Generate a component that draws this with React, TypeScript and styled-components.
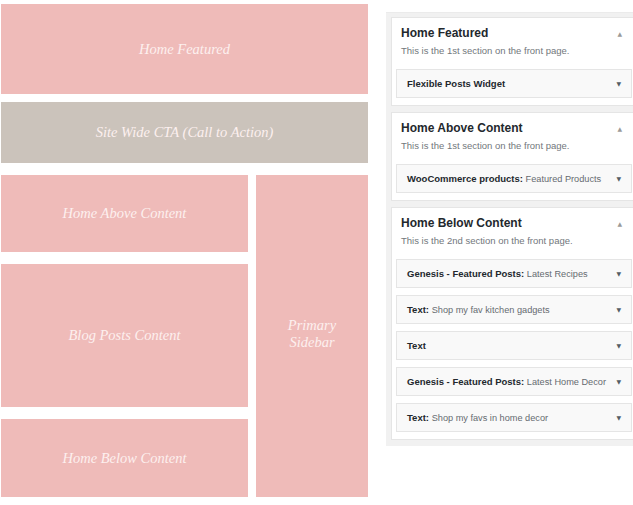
import styled, { createGlobalStyle } from "styled-components"

const GlobalStyle = createGlobalStyle`
  html, body {
    margin: 0;
    padding: 0;
    background: #ffffff;
    overflow: hidden;
  }
`

const Page = styled.div`
  display: flex;
  align-items: flex-start;
  gap: 18px;
  padding: 4px 0 0 1px;
  width: 700px;
`

/* ---------- layout diagram ---------- */

const Diagram = styled.div`
  width: 367px;
  display: flex;
  flex-direction: column;
`

const Block = styled.div<{ $h?: number; $tone?: "pink" | "stone" }>`
  height: ${(p) => (p.$h ? `${p.$h}px` : "auto")};
  background: ${(p) => (p.$tone === "stone" ? "#cbc3bb" : "#efbbb9")};
  display: flex;
  align-items: center;
  justify-content: center;
  text-align: center;

  font-family: "Liberation Serif", serif;
  font-style: italic;
  font-size: 14.5px;
  line-height: 17px;
  color: #fdf0ef;
`

const FeaturedBlock = styled(Block)`
  margin-bottom: 8px;
`

const CtaBlock = styled(Block)`
  margin-bottom: 12px;
`

const ContentArea = styled.div`
  display: grid;
  grid-template-columns: 247px 112px;
  column-gap: 8px;
`

const ContentColumn = styled.div`
  display: flex;
  flex-direction: column;
  gap: 12px;
`

const Sidebar = styled(Block)`
  padding-bottom: 4px;
`

/* ---------- widget areas ---------- */

const Panel = styled.div`
  margin-top: 8px;
  width: 246px;
  background: #f1f1f1;
  border-top: 1px solid #ebebeb;
  padding: 4px 5px 6px 5px;
  display: flex;
  flex-direction: column;
  gap: 6px;
`

const Card = styled.div`
  background: #ffffff;
  border: 1px solid #e5e5e5;
  padding: 0 4px 7px 4px;
`

const CardHead = styled.div`
  display: flex;
  justify-content: space-between;
  align-items: center;
  padding: 7px 5px 0 5px;
  height: 16px;
`

const CardTitle = styled.h3`
  margin: 0;
  font-family: "Liberation Sans", Arial, sans-serif;
  font-size: 12px;
  font-weight: 700;
  color: #23282d;
`

const Toggle = styled.span<{ $dim?: boolean }>`
  font-family: "DejaVu Sans", sans-serif;
  font-size: 6px;
  color: ${(p) => (p.$dim ? "#9a9a9a" : "#555d66")};
  margin-right: ${(p) => (p.$dim ? "5px" : "1px")};
`

const Description = styled.p`
  margin: 4px 0 0 0;
  padding: 0 5px;
  font-family: "Liberation Sans", Arial, sans-serif;
  font-size: 9.5px;
  line-height: 12px;
  color: #72777c;
`

const WidgetList = styled.div`
  margin-top: 12px;
  display: flex;
  flex-direction: column;
  gap: 7px;
`

const Widget = styled.div`
  height: 29px;
  background: #f9f9f9;
  border: 1px solid #e5e5e5;
  display: flex;
  align-items: center;
  justify-content: space-between;
  padding: 0 9px 0 10px;
  box-sizing: border-box;
`

const WidgetName = styled.span`
  font-family: "Liberation Sans", Arial, sans-serif;
  font-size: 9.5px;
  font-weight: 700;
  color: #23282d;
  white-space: nowrap;
`

const WidgetTitle = styled.span`
  font-weight: 400;
  color: #666b70;
  font-size: 9.2px;
`

type WidgetItem = { name: string; title?: string }
type Area = { title: string; desc: string; widgets: WidgetItem[] }

const areas: Area[] = [
  {
    title: "Home Featured",
    desc: "This is the 1st section on the front page.",
    widgets: [{ name: "Flexible Posts Widget" }],
  },
  {
    title: "Home Above Content",
    desc: "This is the 1st section on the front page.",
    widgets: [{ name: "WooCommerce products", title: "Featured Products" }],
  },
  {
    title: "Home Below Content",
    desc: "This is the 2nd section on the front page.",
    widgets: [
      { name: "Genesis - Featured Posts", title: "Latest Recipes" },
      { name: "Text", title: "Shop my fav kitchen gadgets" },
      { name: "Text" },
      { name: "Genesis - Featured Posts", title: "Latest Home Decor" },
      { name: "Text", title: "Shop my favs in home decor" },
    ],
  },
]

const WidgetArea = ({ area }: { area: Area }) => (
  <Card>
    <CardHead>
      <CardTitle>{area.title}</CardTitle>
      <Toggle $dim>▲</Toggle>
    </CardHead>
    <Description>{area.desc}</Description>
    <WidgetList>
      {area.widgets.map((w, i) => (
        <Widget key={i}>
          <WidgetName>
            {w.title ? `${w.name}: ` : w.name}
            {w.title && <WidgetTitle>{w.title}</WidgetTitle>}
          </WidgetName>
          <Toggle>▼</Toggle>
        </Widget>
      ))}
    </WidgetList>
  </Card>
)

export default function App() {
  return (
    <>
      <GlobalStyle />
      <Page>
        <Diagram>
          <FeaturedBlock $h={90}>Home Featured</FeaturedBlock>
          <CtaBlock $h={61} $tone="stone">
            Site Wide CTA (Call to Action)
          </CtaBlock>
          <ContentArea>
            <ContentColumn>
              <Block $h={77}>Home Above Content</Block>
              <Block $h={143}>Blog Posts Content</Block>
              <Block $h={78}>Home Below Content</Block>
            </ContentColumn>
            <Sidebar>
              Primary
              <br />
              Sidebar
            </Sidebar>
          </ContentArea>
        </Diagram>
        <Panel>
          {areas.map((a) => (
            <WidgetArea key={a.title} area={a} />
          ))}
        </Panel>
      </Page>
    </>
  )
}
